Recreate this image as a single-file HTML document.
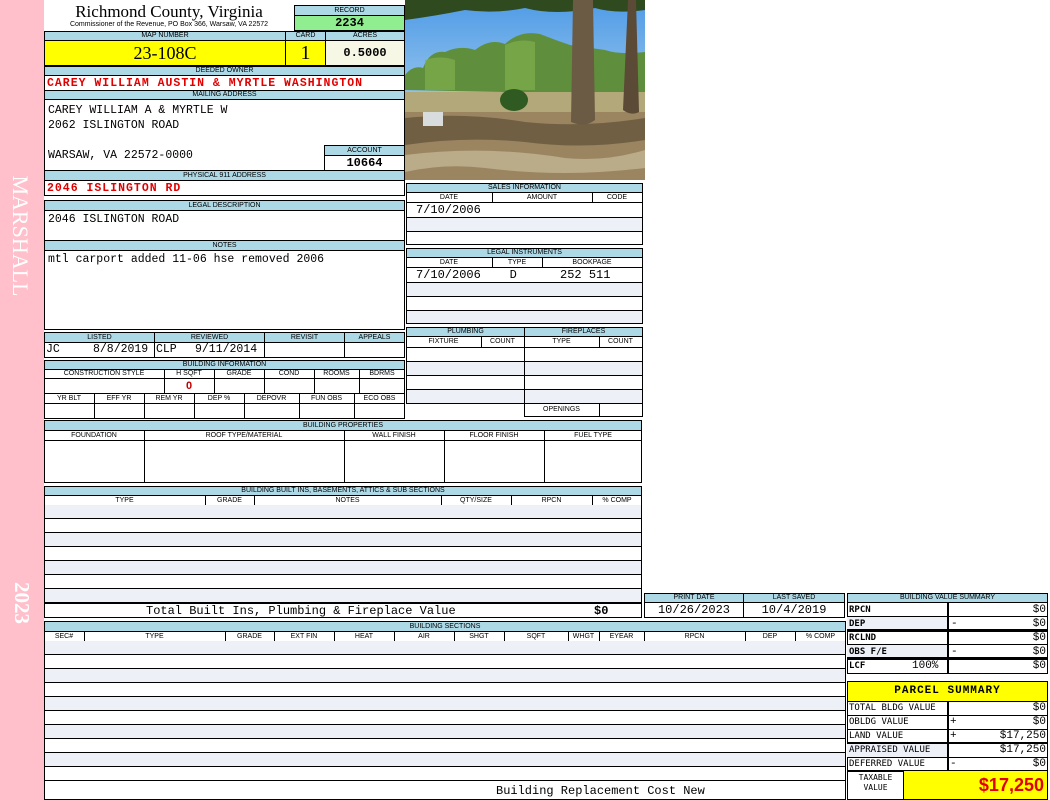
<!DOCTYPE html>
<html><head><meta charset="utf-8"><style>
*{margin:0;padding:0;box-sizing:border-box}
body{width:1050px;height:800px;background:#fff;position:relative;overflow:hidden;font-family:"Liberation Sans",sans-serif}
div{position:absolute}
.h{background:#add8e6;border:1px solid #000;font-size:7px;text-align:center;line-height:8px;color:#000;white-space:nowrap;overflow:hidden}
.c{border:1px solid #000;background:#fff}
.m{font-family:"Liberation Mono",monospace;font-size:12px;white-space:pre;color:#000}
.r{color:#e00000;font-weight:bold;letter-spacing:1px}
.l{background:#eef0f8}
.rows{border:1px solid #000;background:repeating-linear-gradient(to bottom,#eef0f8 0 13px,#000 13px 14px,#fff 14px 27px,#000 27px 28px)}
.t{font-size:7px;text-align:center;line-height:8px}
</style></head><body>
<div style="left:0;top:0;width:44px;height:800px;background:#ffc0cb"></div>
<div style="left:-50px;top:214px;width:140px;height:44px;transform:rotate(90deg);color:#fff;font:22px 'Liberation Serif',serif;text-align:center;line-height:44px">MARSHALL</div>
<div style="left:-10px;top:591px;width:64px;height:24px;transform:rotate(90deg);color:#fff;font:bold 21px 'Liberation Serif',serif;text-align:center;line-height:24px">2023</div>

<div style="left:44px;top:2px;width:250px;text-align:center;font:17px 'Liberation Serif',serif;line-height:20px">Richmond County, Virginia</div>
<div style="left:44px;top:20px;width:250px;text-align:center;font-size:7px;line-height:9px">Commissioner of the Revenue, PO Box 366, Warsaw, VA 22572</div>
<div class="h" style="left:294px;top:5px;width:111px;height:11px;line-height:9px">RECORD</div>
<div class="c m" style="left:294px;top:15px;width:111px;height:16px;background:#90ee90;text-align:center;font-weight:bold;line-height:14px">2234</div>

<div class="h" style="left:44px;top:31px;width:242px;height:10px">MAP NUMBER</div>
<div class="h" style="left:285px;top:31px;width:41px;height:10px">CARD</div>
<div class="h" style="left:325px;top:31px;width:80px;height:10px">ACRES</div>
<div class="c" style="left:44px;top:40px;width:242px;height:26px;background:#ffff00;font:18px 'Liberation Serif',serif;text-align:center;line-height:24px">23-108C</div>
<div class="c" style="left:285px;top:40px;width:41px;height:26px;background:#ffff00;font:20px 'Liberation Serif',serif;text-align:center;line-height:24px">1</div>
<div class="c m" style="left:325px;top:40px;width:80px;height:26px;background:#f7f7e6;font-weight:bold;text-align:center;line-height:24px">0.5000</div>

<div class="h" style="left:44px;top:66px;width:361px;height:10px">DEEDED OWNER</div>
<div class="c m r" style="left:44px;top:75px;width:361px;height:16px;padding-left:2px;line-height:15px;font-size:11.5px">CAREY WILLIAM AUSTIN &amp; MYRTLE WASHINGTON</div>
<div class="h" style="left:44px;top:90px;width:361px;height:10px">MAILING ADDRESS</div>
<div class="c m" style="left:44px;top:99px;width:361px;height:72px;padding:3px 0 0 3px;line-height:15px;font-size:11.5px">CAREY WILLIAM A &amp; MYRTLE W
2062 ISLINGTON ROAD

WARSAW, VA 22572-0000</div>
<div class="h" style="left:324px;top:145px;width:81px;height:11px;line-height:9px">ACCOUNT</div>
<div class="c m" style="left:324px;top:155px;width:81px;height:16px;font-weight:bold;text-align:center;line-height:15px">10664</div>
<div class="h" style="left:44px;top:170px;width:361px;height:11px;line-height:9px">PHYSICAL 911 ADDRESS</div>
<div class="c m r" style="left:44px;top:180px;width:361px;height:16px;padding-left:2px;line-height:15px;font-size:11.5px">2046 ISLINGTON RD</div>

<div class="h" style="left:44px;top:200px;width:361px;height:11px;line-height:9px">LEGAL DESCRIPTION</div>
<div class="c m" style="left:44px;top:210px;width:361px;height:31px;padding:2px 0 0 3px;line-height:14px;font-size:11.5px">2046 ISLINGTON ROAD</div>
<div class="h" style="left:44px;top:240px;width:361px;height:11px;line-height:9px">NOTES</div>
<div class="c m" style="left:44px;top:250px;width:361px;height:80px;padding:2px 0 0 3px;line-height:14px;font-size:11.5px">mtl carport added 11-06 hse removed 2006</div>

<div class="h" style="left:44px;top:332px;width:111px;height:11px;line-height:9px">LISTED</div>
<div class="h" style="left:154px;top:332px;width:111px;height:11px;line-height:9px">REVIEWED</div>
<div class="h" style="left:264px;top:332px;width:81px;height:11px;line-height:9px">REVISIT</div>
<div class="h" style="left:344px;top:332px;width:61px;height:11px;line-height:9px">APPEALS</div>
<div class="c" style="left:44px;top:342px;width:111px;height:16px"></div>
<div class="c" style="left:154px;top:342px;width:111px;height:16px"></div>
<div class="c" style="left:264px;top:342px;width:81px;height:16px"></div>
<div class="c" style="left:344px;top:342px;width:61px;height:16px"></div>
<div class="m" style="left:46px;top:343px;line-height:14px;font-size:11.5px">JC</div>
<div class="m" style="left:93px;top:343px;line-height:14px;font-size:11.5px">8/8/2019</div>
<div class="m" style="left:156px;top:343px;line-height:14px;font-size:11.5px">CLP</div>
<div class="m" style="left:195px;top:343px;line-height:14px;font-size:11.5px">9/11/2014</div>

<div class="h" style="left:44px;top:360px;width:361px;height:10px">BUILDING INFORMATION</div>
<div class="c" style="left:44px;top:369px;width:361px;height:50px"></div>
<div style="left:44px;top:369px;width:361px;height:10px;border-bottom:1px solid #000"></div>
<div style="left:44px;top:393px;width:361px;height:11px;border-top:1px solid #000;border-bottom:1px solid #000"></div>
<div class="t" style="left:44px;top:370px;width:120px">CONSTRUCTION STYLE</div>
<div class="t" style="left:164px;top:370px;width:50px">H SQFT</div>
<div class="t" style="left:214px;top:370px;width:50px">GRADE</div>
<div class="t" style="left:264px;top:370px;width:50px">COND</div>
<div class="t" style="left:314px;top:370px;width:45px">ROOMS</div>
<div class="t" style="left:359px;top:370px;width:46px">BDRMS</div>
<div style="left:164px;top:369px;height:25px;border-left:1px solid #000"></div>
<div style="left:214px;top:369px;height:25px;border-left:1px solid #000"></div>
<div style="left:264px;top:369px;height:25px;border-left:1px solid #000"></div>
<div style="left:314px;top:369px;height:25px;border-left:1px solid #000"></div>
<div style="left:359px;top:369px;height:25px;border-left:1px solid #000"></div>
<div style="left:164px;top:379px;width:50px;text-align:center;color:#c00000;font:bold 11px 'Liberation Sans',sans-serif;line-height:15px">0</div>
<div class="t" style="left:44px;top:395px;width:50px">YR BLT</div>
<div class="t" style="left:94px;top:395px;width:50px">EFF YR</div>
<div class="t" style="left:144px;top:395px;width:50px">REM YR</div>
<div class="t" style="left:194px;top:395px;width:50px">DEP %</div>
<div class="t" style="left:244px;top:395px;width:55px">DEPOVR</div>
<div class="t" style="left:299px;top:395px;width:55px">FUN OBS</div>
<div class="t" style="left:354px;top:395px;width:51px">ECO OBS</div>
<div style="left:94px;top:394px;height:25px;border-left:1px solid #000"></div>
<div style="left:144px;top:394px;height:25px;border-left:1px solid #000"></div>
<div style="left:194px;top:394px;height:25px;border-left:1px solid #000"></div>
<div style="left:244px;top:394px;height:25px;border-left:1px solid #000"></div>
<div style="left:299px;top:394px;height:25px;border-left:1px solid #000"></div>
<div style="left:354px;top:394px;height:25px;border-left:1px solid #000"></div>

<svg style="position:absolute;left:405px;top:0" width="240" height="180" viewBox="0 0 240 180">
<defs><linearGradient id="sky" x1="0" y1="0" x2="0" y2="1"><stop offset="0" stop-color="#4f9be6"/><stop offset="1" stop-color="#cfe6f4"/></linearGradient></defs>
<rect width="240" height="180" fill="url(#sky)"/>
<path d="M0 90 L0 75 Q8 65 18 68 Q25 50 40 52 Q55 45 70 50 Q85 38 100 44 Q115 30 135 34 Q150 40 165 45 L200 50 Q215 55 240 52 L240 95 Z" fill="#5f8f3c"/>
<path d="M20 60 Q35 55 50 60 L50 90 L20 90Z M100 45 Q115 38 130 42 L130 90 L100 90Z" fill="#7fae4a" opacity=".7"/>
<path d="M0 0 H240 V10 Q210 14 190 8 Q150 16 120 8 Q90 14 60 10 Q30 16 0 20Z" fill="#2e4a1e"/>
<rect y="92" width="240" height="88" fill="#b3a87a"/>
<rect y="112" width="240" height="68" fill="#9a8560"/>
<path d="M0 118 Q60 112 120 122 Q180 128 240 118 V140 Q180 150 120 142 Q60 136 0 145Z" fill="#5e4e36" opacity=".7"/>
<path d="M0 155 Q80 145 160 158 Q200 162 240 150 V168 Q160 178 80 168 Q40 163 0 172Z" fill="#c2b494" opacity=".8"/>
<ellipse cx="109" cy="100" rx="14" ry="11" fill="#2f5a22"/>
<rect x="18" y="112" width="20" height="14" fill="#d8dcdc"/>
<path d="M168 0 H188 L190 120 Q180 128 166 122Z" fill="#6b5a44"/>
<path d="M223 0 H231 L234 112 Q226 116 218 110Z" fill="#5a4a36"/>
</svg>

<div class="h" style="left:406px;top:183px;width:237px;height:10px">SALES INFORMATION</div>
<div class="c" style="left:406px;top:192px;width:237px;height:53px;background:linear-gradient(#fff 0 24px,#000 24px 25px,#eef0f8 25px 38px,#000 38px 39px,#fff 39px)"></div>
<div style="left:406px;top:192px;width:237px;height:11px;border-bottom:1px solid #000"></div>
<div class="t" style="left:406px;top:194px;width:86px">DATE</div><div class="t" style="left:492px;top:194px;width:100px">AMOUNT</div><div class="t" style="left:592px;top:194px;width:50px">CODE</div>
<div style="left:492px;top:192px;height:11px;border-left:1px solid #000"></div><div style="left:592px;top:192px;height:11px;border-left:1px solid #000"></div>
<div class="m" style="left:416px;top:203px;line-height:15px">7/10/2006</div>

<div class="h" style="left:406px;top:248px;width:237px;height:10px">LEGAL INSTRUMENTS</div>
<div class="c" style="left:406px;top:257px;width:237px;height:67px;background:linear-gradient(#fff 0 24px,#000 24px 25px,#eef0f8 25px 38px,#000 38px 39px,#fff 39px 52px,#000 52px 53px,#eef0f8 53px)"></div>
<div style="left:406px;top:257px;width:237px;height:11px;border-bottom:1px solid #000"></div>
<div class="t" style="left:406px;top:259px;width:86px">DATE</div><div class="t" style="left:492px;top:259px;width:50px">TYPE</div><div class="t" style="left:542px;top:259px;width:100px">BOOKPAGE</div>
<div style="left:492px;top:257px;height:11px;border-left:1px solid #000"></div><div style="left:542px;top:257px;height:11px;border-left:1px solid #000"></div>
<div class="m" style="left:416px;top:268px;line-height:15px">7/10/2006    D      252 511</div>

<div class="h" style="left:406px;top:327px;width:119px;height:10px">PLUMBING</div>
<div class="h" style="left:524px;top:327px;width:119px;height:10px">FIREPLACES</div>
<div class="c" style="left:406px;top:336px;width:119px;height:68px;background:linear-gradient(#fff 0 10px,#000 10px 11px,#fff 11px 24px,#000 24px 25px,#eef0f8 25px 38px,#000 38px 39px,#fff 39px 52px,#000 52px 53px,#eef0f8 53px)"></div>
<div class="c" style="left:524px;top:336px;width:119px;height:81px;background:linear-gradient(#fff 0 10px,#000 10px 11px,#fff 11px 24px,#000 24px 25px,#eef0f8 25px 38px,#000 38px 39px,#fff 39px 52px,#000 52px 53px,#eef0f8 53px 66px,#000 66px 67px,#fff 67px)"></div>
<div class="t" style="left:406px;top:338px;width:75px">FIXTURE</div><div class="t" style="left:481px;top:338px;width:43px">COUNT</div>
<div class="t" style="left:524px;top:338px;width:75px">TYPE</div><div class="t" style="left:599px;top:338px;width:43px">COUNT</div>
<div style="left:481px;top:336px;height:11px;border-left:1px solid #000"></div><div style="left:599px;top:336px;height:11px;border-left:1px solid #000"></div>
<div class="t" style="left:524px;top:406px;width:75px">OPENINGS</div><div style="left:599px;top:403px;height:14px;border-left:1px solid #000"></div>

<div class="h" style="left:44px;top:420px;width:598px;height:11px;line-height:9px">BUILDING PROPERTIES</div>
<div class="c" style="left:44px;top:430px;width:598px;height:53px"></div>
<div style="left:44px;top:430px;width:598px;height:11px;border-bottom:1px solid #000"></div>
<div class="t" style="left:44px;top:432px;width:100px">FOUNDATION</div>
<div class="t" style="left:144px;top:432px;width:200px">ROOF TYPE/MATERIAL</div>
<div class="t" style="left:344px;top:432px;width:100px">WALL FINISH</div>
<div class="t" style="left:444px;top:432px;width:100px">FLOOR FINISH</div>
<div class="t" style="left:544px;top:432px;width:98px">FUEL TYPE</div>
<div style="left:144px;top:430px;height:53px;border-left:1px solid #000"></div>
<div style="left:344px;top:430px;height:53px;border-left:1px solid #000"></div>
<div style="left:444px;top:430px;height:53px;border-left:1px solid #000"></div>
<div style="left:544px;top:430px;height:53px;border-left:1px solid #000"></div>

<div class="h" style="left:44px;top:486px;width:598px;height:10px">BUILDING BUILT INS, BASEMENTS, ATTICS &amp; SUB SECTIONS</div>
<div class="c" style="left:44px;top:495px;width:598px;height:11px"></div>
<div class="t" style="left:44px;top:497px;width:161px">TYPE</div>
<div class="t" style="left:205px;top:497px;width:49px">GRADE</div>
<div class="t" style="left:254px;top:497px;width:187px">NOTES</div>
<div class="t" style="left:441px;top:497px;width:70px">QTY/SIZE</div>
<div class="t" style="left:511px;top:497px;width:81px">RPCN</div>
<div class="t" style="left:592px;top:497px;width:50px">% COMP</div>
<div style="left:205px;top:495px;height:11px;border-left:1px solid #000"></div>
<div style="left:254px;top:495px;height:11px;border-left:1px solid #000"></div>
<div style="left:441px;top:495px;height:11px;border-left:1px solid #000"></div>
<div style="left:511px;top:495px;height:11px;border-left:1px solid #000"></div>
<div style="left:592px;top:495px;height:11px;border-left:1px solid #000"></div>
<div class="rows" style="left:44px;top:505px;width:598px;height:113px;border-top:none"></div>
<div class="c m" style="left:44px;top:603px;width:598px;height:15px;line-height:14px"></div>
<div class="m" style="left:146px;top:604px;line-height:14px">Total Built Ins, Plumbing &amp; Fireplace Value</div>
<div class="m" style="left:594px;top:604px;line-height:14px;font-weight:bold">$0</div>

<div class="h" style="left:644px;top:593px;width:100px;height:10px">PRINT DATE</div>
<div class="h" style="left:743px;top:593px;width:102px;height:10px">LAST SAVED</div>
<div class="c m" style="left:644px;top:602px;width:100px;height:16px;text-align:center;line-height:14px">10/26/2023</div>
<div class="c m" style="left:743px;top:602px;width:102px;height:16px;text-align:center;line-height:14px">10/4/2019</div>

<div class="h" style="left:44px;top:621px;width:802px;height:11px;line-height:9px">BUILDING SECTIONS</div>
<div class="c" style="left:44px;top:631px;width:802px;height:11px"></div>
<div class="t" style="left:44px;top:633px;width:40px">SEC#</div>
<div class="t" style="left:84px;top:633px;width:141px">TYPE</div>
<div class="t" style="left:225px;top:633px;width:49px">GRADE</div>
<div class="t" style="left:274px;top:633px;width:60px">EXT FIN</div>
<div class="t" style="left:334px;top:633px;width:60px">HEAT</div>
<div class="t" style="left:394px;top:633px;width:60px">AIR</div>
<div class="t" style="left:454px;top:633px;width:50px">SHGT</div>
<div class="t" style="left:504px;top:633px;width:64px">SQFT</div>
<div class="t" style="left:568px;top:633px;width:31px">WHGT</div>
<div class="t" style="left:599px;top:633px;width:45px">EYEAR</div>
<div class="t" style="left:644px;top:633px;width:101px">RPCN</div>
<div class="t" style="left:745px;top:633px;width:50px">DEP</div>
<div class="t" style="left:795px;top:633px;width:51px">% COMP</div>
<div style="left:84px;top:631px;height:11px;border-left:1px solid #000"></div>
<div style="left:225px;top:631px;height:11px;border-left:1px solid #000"></div>
<div style="left:274px;top:631px;height:11px;border-left:1px solid #000"></div>
<div style="left:334px;top:631px;height:11px;border-left:1px solid #000"></div>
<div style="left:394px;top:631px;height:11px;border-left:1px solid #000"></div>
<div style="left:454px;top:631px;height:11px;border-left:1px solid #000"></div>
<div style="left:504px;top:631px;height:11px;border-left:1px solid #000"></div>
<div style="left:568px;top:631px;height:11px;border-left:1px solid #000"></div>
<div style="left:599px;top:631px;height:11px;border-left:1px solid #000"></div>
<div style="left:644px;top:631px;height:11px;border-left:1px solid #000"></div>
<div style="left:745px;top:631px;height:11px;border-left:1px solid #000"></div>
<div style="left:795px;top:631px;height:11px;border-left:1px solid #000"></div>
<div class="rows" style="left:44px;top:641px;width:802px;height:140px;border-top:none"></div>
<div class="c m" style="left:44px;top:780px;width:802px;height:20px"></div>
<div class="m" style="left:496px;top:784px;line-height:14px">Building Replacement Cost New</div>

<div class="h" style="left:847px;top:593px;width:201px;height:10px">BUILDING VALUE SUMMARY</div>
<div class="c" style="left:847px;top:602px;width:201px;height:72px"></div>
<div style="left:847px;top:616px;width:101px;height:14px;background:#eef0f8"></div>
<div style="left:847px;top:644px;width:101px;height:14px;background:#eef0f8"></div>
<div style="left:847px;top:616px;width:201px;border-top:1px solid #000"></div>
<div style="left:847px;top:629px;width:201px;border-top:3px solid #000"></div>
<div style="left:847px;top:644px;width:201px;border-top:1px solid #000"></div>
<div style="left:847px;top:657px;width:201px;border-top:3px solid #000"></div>
<div style="left:947px;top:602px;height:72px;border-left:2px solid #000"></div>
<div class="m" style="left:849px;top:603px;font-size:9px;line-height:14px;font-family:'DejaVu Sans Mono',monospace;font-weight:bold">RPCN
DEP
RCLND
OBS F/E
LCF</div>
<div class="m" style="left:912px;top:659px;font-size:11px;line-height:14px">100%</div>
<div class="m" style="left:951px;top:603px;font-size:11px;line-height:14px">
-

-</div>
<div class="m" style="left:950px;top:603px;width:96px;text-align:right;font-size:11px;line-height:14px">$0
$0
$0
$0
$0</div>

<div class="c" style="left:847px;top:681px;width:201px;height:21px;background:#ffff00;text-align:center;font:bold 11px 'Liberation Mono',monospace;line-height:19px;letter-spacing:1px">PARCEL SUMMARY</div>
<div class="c" style="left:847px;top:701px;width:201px;height:99px"></div>
<div style="left:847px;top:743px;width:101px;height:14px;background:#eef0f8"></div>
<div style="left:847px;top:715px;width:201px;border-top:1px solid #000"></div>
<div style="left:847px;top:729px;width:201px;border-top:1px solid #000"></div>
<div style="left:847px;top:742px;width:201px;border-top:2px solid #000"></div>
<div style="left:847px;top:757px;width:201px;border-top:1px solid #000"></div>
<div style="left:847px;top:770px;width:201px;border-top:2px solid #000"></div>
<div style="left:947px;top:701px;height:70px;border-left:2px solid #000"></div>
<div class="m" style="left:849px;top:701px;font-size:9px;line-height:14px;font-family:'DejaVu Sans Mono',monospace">TOTAL BLDG VALUE
OBLDG VALUE
LAND VALUE
APPRAISED VALUE
DEFERRED VALUE</div>
<div class="m" style="left:950px;top:701px;font-size:11px;line-height:14px">
+
+

-</div>
<div class="m" style="left:950px;top:701px;width:96px;text-align:right;font-size:11px;line-height:14px">$0
$0
$17,250
$17,250
$0</div>
<div class="m" style="left:848px;top:773px;width:55px;text-align:center;font-size:8px;line-height:10px;font-family:'DejaVu Sans Mono',monospace">TAXABLE
VALUE</div>
<div style="left:903px;top:771px;width:145px;height:29px;background:#ffff00;border-left:1px solid #000;border-right:1px solid #000;border-bottom:1px solid #000;color:#e00000;font:bold 18px 'Liberation Sans',sans-serif;text-align:right;padding-right:3px;line-height:28px">$17,250</div>
</body></html>
